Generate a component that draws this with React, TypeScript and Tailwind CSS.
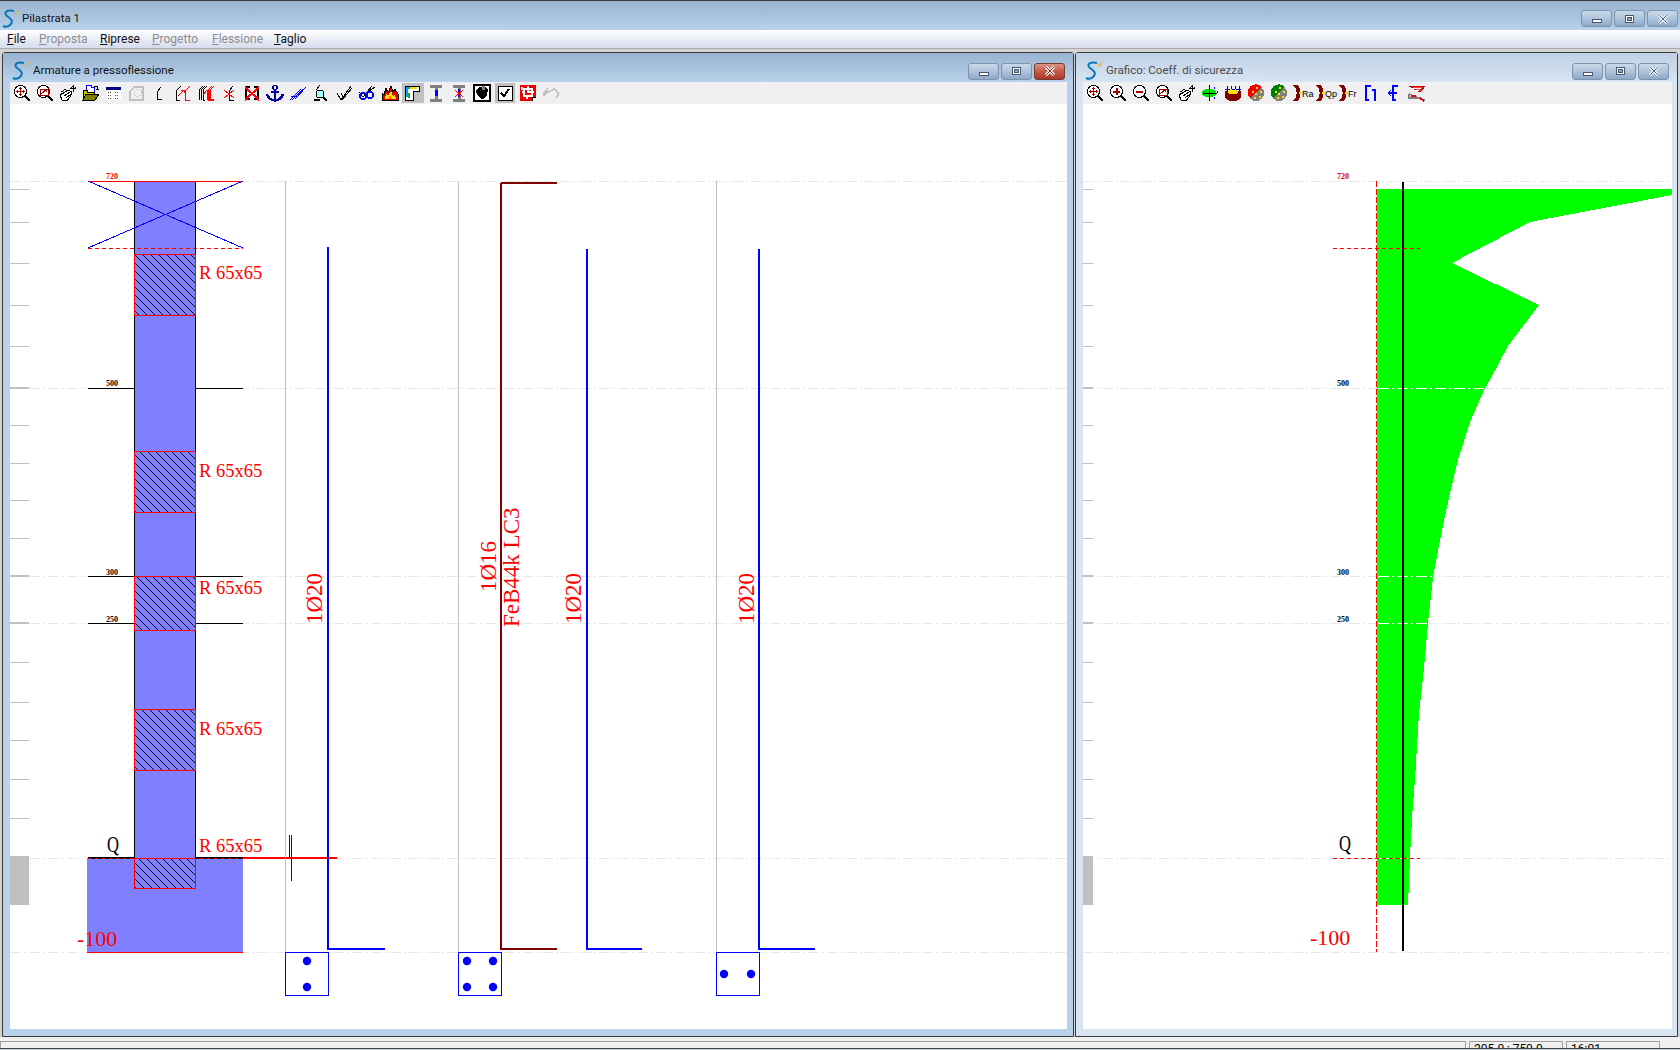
import React from "react";

const ticks = [189, 222, 263, 305, 346, 388, 425, 463, 500, 538, 576, 623, 662, 702, 740, 779, 818, 857];
const levels = [181, 388, 576, 623, 858, 952];
const hatches = [
    [254, 315],
    [451, 512],
    [576, 630],
    [709, 770],
    [858, 888],
];
const rLabels = [279, 477, 594, 735, 852];

const serif = "Liberation Serif, serif";

const Logo = () => (
    <svg width="18" height="20" viewBox="0 0 18 20" className="shrink-0">
        <path d="M12 2 C5 0 1 4 5 7 C9 10 12 12 8 16 C6 18 3 18 1 17" fill="none" stroke="#0a78b8" strokeWidth="2" />
        <path d="M13 2 L14.5 6 L17 1" fill="none" stroke="#e0b030" strokeWidth="1" />
    </svg>
);

const WinBtn = ({ kind, active }: { kind: "min" | "max" | "close"; active?: boolean }) => (
    <div
        className={
            active
                ? "w-[31px] h-[17px] rounded-[3px] border border-[#7a3a30] bg-linear-to-b from-[#dc9484] via-[#c45a44] to-[#a83c2c] flex items-center justify-center"
                : "w-[31px] h-[17px] rounded-[3px] border border-[#7f93ab] bg-linear-to-b from-[#c9d9ea] via-[#aec4dc] to-[#8ca8c8] flex items-center justify-center"
        }
    >
        {kind === "min" && <div className="w-[10px] h-[4px] mt-[5px] bg-white border border-[#49566a]" />}
        {kind === "max" && (
            <div className="w-[9px] h-[8px] border border-[#49566a] bg-white flex items-center justify-center">
                <div className="w-[5px] h-[4px] bg-[#8ea6c2] border border-[#49566a]" />
            </div>
        )}
        {kind === "close" && (
            <svg width="12" height="10" viewBox="0 0 12 10">
                <path d="M2 1 L10 9 M10 1 L2 9" stroke={active ? "#ffffff" : "#eef3f8"} strokeWidth="3" />
                <path d="M2 1 L10 9 M10 1 L2 9" stroke={active ? "#7a2a20" : "#55657a"} strokeWidth="1" />
            </svg>
        )}
    </div>
);

const Lens = ({ children }: { children?: React.ReactNode }) => (
    <>
        <circle cx="7.5" cy="7.5" r="6" fill="#fff" stroke="#000" strokeWidth="1.2" />
        <path d="M12 12 L17 17" stroke="#000" strokeWidth="2.4" />
        {children}
    </>
);

const cross = <path d="M7.5 3 V12 M3 7.5 H12 M6 4.5 H9 M6 10.5 H9 M4.500 6 V9 M10.500 6 V9" stroke="#a00000" strokeWidth="1" fill="none" />;
const winArrow = <path d="M4 5 H12 V11 H4 Z M5 10 L10 6 M8 6 H10 V8" stroke="#a00000" strokeWidth="1" fill="none" />;

const hand = (
    <>
        <path d="M1 11 L9 6 L13 8 L11 13 L8 17 L3 16 Z" fill="#fff" stroke="#000" />
        <path d="M2 8 L7 5 M3 10 L9 6 M5 12 L11 8 M7 14 L12 10" stroke="#000" />
        <path d="M14 1 V8 M11 4 H17 M13 2 H15 M12 3 V5 M16 3 V5" stroke="#000" />
    </>
);

const iconsLeft: React.ReactNode[] = [
    <Lens key="a">{cross}</Lens>,
    <Lens key="b">{winArrow}</Lens>,
    hand,
    <>
        <path d="M4 1 H9 V3 H12 V9 H4 Z" fill="#fff" stroke="#0000ff" />
        <path d="M1 6 H5 V8 H12 V16 H1 Z" fill="#c8c800" stroke="#000" />
        <path d="M4 10 H17 L13 16 H1 Z" fill="#808000" stroke="#000" />
        <path d="M12 2 L15 2 L15 6 M13.500 5 H16.500" stroke="#000" fill="none" />
    </>,
    <>
        <rect x="1" y="3" width="15" height="13" fill="#fff" />
        <rect x="1" y="3" width="15" height="3" fill="#000080" />
        <path d="M3 8 H7 M10 8 H14 M3 11 H7 M10 11 H14 M3 14 H7 M10 14 H14" stroke="#555" strokeDasharray="1 1" />
    </>,
    <>
        <path d="M2 16 V8 L6 3 H15 V16 Z" fill="none" stroke="#c0c0c0" strokeWidth="1.4" />
        <circle cx="10" cy="9" r="3.500" fill="none" stroke="#c0c0c0" strokeDasharray="1 1" />
    </>,
    <path d="M10 3 L6 8 V15 H11" fill="none" stroke="#000" strokeWidth="1" />,
    <>
        <path d="M7 2 L2 7 V16 H6" fill="none" stroke="#000" strokeWidth="1" />
        <path d="M16 2 L11 7 V16 H16" fill="none" stroke="#f00" strokeWidth="1" />
        <path d="M4 12 L10 6 M7 6 H10 V9" fill="none" stroke="#f00" />
    </>,
    <>
        <path d="M6 2 L2 6 V16 M8 2 L4 6 V16 M10 2 L6 6 V16 H8" fill="none" stroke="#000" />
        <path d="M15 2 L11 6 V16 M17 2 L13 6 V16 H17 M11 16 H13" fill="none" stroke="#f00" strokeWidth="1.400" />
        <path d="M6 11 L10 6" stroke="#f00" />
    </>,
    <>
        <path d="M13 2 L9 7 V16 H14" fill="none" stroke="#000" />
        <path d="M4 6 L14 14 M14 6 L4 14" stroke="#f00" strokeWidth="1" />
    </>,
    <>
        <path d="M7 3 H3 V15 H7 M11 3 H15 V15 H11" fill="none" stroke="#000" strokeWidth="1.200" />
        <path d="M2 3 L16 16 M16 3 L2 16" stroke="#f00" strokeWidth="2" />
    </>,
    <>
        <circle cx="9" cy="3.500" r="2" fill="none" stroke="#0000a0" strokeWidth="1.500" />
        <path d="M9 5 V16 M5 8 H13" stroke="#0000a0" strokeWidth="2.400" />
        <path d="M1 10 C2 14 5 16 9 16.500 C13 16 16 14 17 10" fill="none" stroke="#0000a0" strokeWidth="2.400" />
    </>,
    <path d="M1 16 L12 5 M3 16 L14 5 M6 15 L17 3 M2 12 H8 M6 10 L9 13 M9 7 L12 10" fill="none" stroke="#0000e0" strokeWidth="1" />,
    <>
        <path d="M8 1 L4 6" stroke="#000" fill="none" />
        <circle cx="8" cy="10" r="4" fill="#a0ffff" stroke="#000" strokeWidth="1" />
        <path d="M11 13 L15 17 M2 16 H8" stroke="#000" strokeWidth="1.800" />
    </>,
    <path d="M2 9 L6 16 L16 2 M6 9 L8 13 M7 16 L17 4" fill="none" stroke="#000" strokeWidth="1" />,
    <>
        <path d="M1 8 L5 13 L14 2 M8 9 L17 3" fill="none" stroke="#000" strokeWidth="1" />
        <circle cx="5" cy="12" r="3" fill="none" stroke="#0000ff" strokeWidth="1.500" />
        <circle cx="12" cy="11" r="3" fill="none" stroke="#0000ff" strokeWidth="1.500" />
    </>,
    <>
        <path d="M1 16 V9 L3 11 L5 4 L7 9 L10 2 L12 8 L14 5 L17 10 V16 Z" fill="#e00000" stroke="#000" />
        <path d="M4 15 L5 10 L7 12 L10 7 L12 12 L14 10 L15 15 Z" fill="#ffe000" />
        <path d="M7 15 L9 11 L11 15 Z" fill="#ff8000" />
    </>,
    <>
        <rect x="-2" y="-1" width="22" height="20" fill="#c0c0c0" />
        <path d="M1 2 H15 V7 H9 V16 H1 Z" fill="#fff" stroke="#000" strokeWidth="1" />
        <path d="M3 13 V4 H7" fill="none" stroke="#00a0ff" strokeWidth="2" />
        <path d="M6 4 H13" stroke="#ffe000" strokeWidth="2" />
        <path d="M5 9 V14" stroke="#00c000" strokeWidth="2" />
    </>,
    <>
        <path d="M3 2 H15 M3 16 H15" stroke="#808080" strokeWidth="3" />
        <path d="M9 3 V15" stroke="#808080" strokeWidth="3" />
        <path d="M9 6 V12" stroke="#0000ff" strokeWidth="3" />
    </>,
    <>
        <path d="M3 2 H15 M3 16 H15" stroke="#808080" strokeWidth="3" />
        <path d="M9 3 V15" stroke="#808080" strokeWidth="3" />
        <path d="M9 5 V13" stroke="#0000ff" strokeWidth="2" />
        <path d="M5 6 L13 13 M13 6 L5 13" stroke="#f00" strokeWidth="1" />
    </>,
    <>
        <rect x="1" y="1" width="16" height="16" fill="#fff" stroke="#000" strokeWidth="1.500" />
        <path d="M3 6 L6 3 H12 L15 6 L14 11 L10 15 H8 L4 11 Z" fill="#000" />
        <rect x="9" y="2" width="3" height="4" fill="#808080" />
    </>,
    <>
        <rect x="-1" y="-1" width="20" height="20" fill="#c0c0c0" />
        <rect x="2" y="2" width="14" height="14" fill="#fff" stroke="#000" strokeWidth="1" />
        <path d="M5 9 L8 12 L13 5" fill="none" stroke="#000" strokeWidth="2" />
    </>,
    <>
        <path d="M1 1 H17 V13 L13 17 H1 Z" fill="#f00000" />
        <path d="M13 17 V13 H17" fill="#fff" stroke="#000" />
        <path d="M5 5 H13 V12 H5 Z M9 2 V8 H15 M3 8 H6 M8 12 V15 M3 3 V6" fill="none" stroke="#fff" strokeWidth="1.500" />
    </>,
    <path d="M2 8 H7 M2 8 V12 M2 8 L6 5 M3 10 L12 5 L16 8 V12 L13 14" fill="none" stroke="#c0c0c0" strokeWidth="1.400" />,
];

const Section = ({ code }: { code: string }) => (
    <>
        <path d="M0 1 C5 4 5 14 0 17 L5 17 C8 13 8 5 5 1 Z" fill="#800000" />
        <rect x="6" y="8" width="3" height="2" fill="#ffe000" />
        <text x="9" y="13" fontSize="9" fontFamily="Liberation Sans, sans-serif" fill="#000">
            {code}
        </text>
    </>
);

const iconsRight: React.ReactNode[] = [
    <Lens key="a">{cross}</Lens>,
    <Lens key="b">
        <path d="M7.500 4 V11 M4 7.500 H11" stroke="#a00000" strokeWidth="2" />
    </Lens>,
    <Lens key="c">
        <path d="M4 7.500 H11" stroke="#a00000" strokeWidth="2" />
    </Lens>,
    <Lens key="d">{winArrow}</Lens>,
    hand,
    <>
        <ellipse cx="8" cy="9" rx="7" ry="4.500" fill="#00e000" />
        <path d="M8 1 V17 M2 9 H16" stroke="#000" />
        <path d="M13 3 V5 M13 13 V15 M16 7 V9" stroke="#0000ff" />
    </>,
    <>
        <path d="M1 7 H17 V12 C17 16 14 17 9 17 C4 17 1 16 1 12 Z" fill="#800000" />
        <path d="M3 2 V9 M7 2 V9 M11 2 V9 M15 2 V9 M1 5 H17" stroke="#0000c0" />
        <path d="M4 7 L7 5 L9 7 L12 5 L14 8 L13 10 H5 Z" fill="#ffe000" />
    </>,
    <>
        <circle cx="9" cy="9" r="8" fill="#808080" />
        <path d="M15 3 A8 8 0 0 0 3 14 Z" fill="#f00000" />
        <path d="M5 8 H7 M9 4 H11 M8 10 H10 M13 8 H15 M7 14 H9 M12 13 H14" stroke="#ffe000" strokeWidth="2" />
    </>,
    <>
        <circle cx="9" cy="9" r="8" fill="#808080" />
        <path d="M15 3 A8 8 0 0 0 3 14 Z" fill="#008000" />
        <path d="M5 8 H7 M9 4 H11 M8 10 H10 M13 8 H15 M7 14 H9 M12 13 H14" stroke="#ffe000" strokeWidth="2" />
    </>,
    <Section key="ra" code="Ra" />,
    <Section key="qp" code="Qp" />,
    <Section key="fr" code="Fr" />,
    <path d="M9 2 H4 V16 H7 M10 6 H13 V17" fill="none" stroke="#0000ff" strokeWidth="1.400" />,
    <path d="M13 2 H8 V16 H11 M3 9 H12 M6 6 L3 9 L6 12" fill="none" stroke="#0000ff" strokeWidth="1.300" />,
    <>
        <path d="M1 2 H17 L12 8 Z" fill="#f04040" stroke="#c00000" />
        <path d="M2 4 H13 M4 6 H11" stroke="#fff" />
        <path d="M1 10 L16 16 V17 M1 10 V14 H10" fill="none" stroke="#808080" strokeWidth="1.500" />
        <path d="M3 12 H8 M12 14 L16 17" stroke="#f00000" strokeWidth="2" />
    </>,
];

const Toolbar = ({ icons }: { icons: React.ReactNode[] }) => (
    <div className="h-[22px] bg-[#f0f0f0] flex items-center shrink-0">
        {icons.map((icon, i) => (
            <div key={i} className="w-[23px] h-[22px] flex items-center justify-center shrink-0">
                <svg width="18" height="18" viewBox="0 0 18 18" shapeRendering="crispEdges" className="overflow-visible">
                    {icon}
                </svg>
            </div>
        ))}
    </div>
);

const Window = ({
    title,
    active,
    width,
    icons,
    children,
}: {
    title: string;
    active?: boolean;
    width: string;
    icons: React.ReactNode[];
    children: React.ReactNode;
}) => (
    <div className={`${width} h-[985px] border border-[#3a3a3a] rounded-t-[3px] flex flex-col shrink-0 ${active ? "bg-[#b9d1ea]" : "bg-[#d7e4f2]"}`}>
        <div
            className={
                active
                    ? "h-[29px] shrink-0 pl-[9px] pr-[8px] pt-[7px] flex items-center bg-linear-to-b from-[#99b4d1] to-[#b9d1ea]"
                    : "h-[29px] shrink-0 pl-[9px] pr-[8px] pt-[7px] flex items-center bg-linear-to-b from-[#bfd1e5] to-[#d7e4f2]"
            }
        >
            <Logo />
            <span className={`ml-[3px] text-[11.5px] ${active ? "text-[#101010]" : "text-[#4a4a4a]"}`}>{title}</span>
            <div className="ml-auto flex gap-[2px]">
                <WinBtn kind="min" />
                <WinBtn kind="max" />
                <WinBtn kind="close" active={active} />
            </div>
        </div>
        <div className={`flex-1 ml-[7px] ${active ? "mr-[6px]" : "mr-[5px]"} mb-[7px] flex flex-col`}>
            <Toolbar icons={icons} />
            <div className="flex-1 bg-white">{children}</div>
        </div>
    </div>
);

const Scale = ({ from, to, tickEnd }: { from: number; to: number; tickEnd: number }) => (
    <g shapeRendering="crispEdges">
        {levels.map((y) => (
            <line key={y} x1={from} x2={to} y1={y + 0.5} y2={y + 0.5} stroke="#e8e8e8" strokeDasharray="11 3 2 3" />
        ))}
        {ticks.map((y) => (
            <line
                key={y}
                x1={from}
                x2={tickEnd}
                y1={y}
                y2={y}
                stroke="#c0c0c0"
                strokeWidth={y === 388 || y === 576 || y === 623 ? 2 : 1}
            />
        ))}
        <rect x={from} y={856} width={tickEnd - from} height={49} fill="#c0c0c0" />
    </g>
);

const Tiny = ({ x, y, t, fill }: { x: number; y: number; t: string; fill: string }) => (
    <text x={x} y={y} fontFamily={serif} fontWeight="bold" fontSize="8" fill={fill}>
        {t}
    </text>
);

const Rotated = ({ x, y, t }: { x: number; y: number; t: string }) => (
    <text x={x} y={y} transform={`rotate(-90 ${x} ${y})`} fontFamily={serif} fontSize="23" fill="#ff0000">
        {t}
    </text>
);

const Bar = ({ x, top, end, colour = "#0000ff" }: { x: number; top: number; end: number; colour?: string }) => (
    <path d={`M${x} ${top} V949 H${end}`} fill="none" stroke={colour} strokeWidth="2" />
);

const Zero = ({ x, y }: { x: number; y: number }) => (
    <text x={x} y={y} fontFamily={serif} fontSize="23" textLength="12" lengthAdjust="spacingAndGlyphs" fill="#000">
        Q
    </text>
);

const LeftChart = () => (
    <svg width="1057" height="925" viewBox="10 104 1057 925" className="block">
        <defs>
            <pattern id="hatch" patternUnits="userSpaceOnUse" width="8" height="8">
                <path d="M0 0 L8 8" stroke="#000" strokeWidth="1" />
            </pattern>
        </defs>
        <Scale from={10} to={1067} tickEnd={29} />
        <g shapeRendering="crispEdges">
            <rect x="134" y="181" width="62" height="677" fill="#8080ff" />
            <rect x="87" y="858" width="156" height="94" fill="#8080ff" />
            <path d="M134.500 181 V858 M195.500 181 V858" stroke="#000" fill="none" />
            {hatches.map(([a, b]) => (
                <rect key={a} x="134.500" y={a + 0.5} width="61" height={b - a} fill="url(#hatch)" stroke="#ff0000" />
            ))}
            <path d="M88 181.500 H243" stroke="#ff0000" />
            <path d="M88 248.500 H243" stroke="#ff0000" strokeDasharray="4 3" />
            <path d="M88 181 L243 248 M88 248 L243 181" stroke="#0000ff" />
            {[388, 576, 623].map((y) => (
                <path key={y} d={`M88 ${y + 0.5} H134 M196 ${y + 0.5} H243`} stroke="#000" />
            ))}
            <path d="M88 858 H134 M196 858 H243" stroke="#000" strokeWidth="2" />
            <path d="M88 858 H243" stroke="#ff0000" strokeDasharray="3 4" />
            <path d="M243 858 H337" stroke="#ff0000" strokeWidth="2" />
            <path d="M87 952.500 H243" stroke="#ff0000" />

            {[285.500, 458.500, 716.500].map((x) => (
                <path key={x} d={`M${x} 181 V952`} stroke="#c0c0c0" />
            ))}
            <path d="M289.500 835 V858 M291.500 835 V881" stroke="#0000ff" />
            <Bar x={328} top={247} end={385} />
            <path d="M501 183 V949 H557 M501 183 H557" fill="none" stroke="#800000" strokeWidth="2" />
            <Bar x={587} top={249} end={642} />
            <Bar x={759} top={249} end={815} />
            {[285.500, 458.500, 716.500].map((x) => (
                <rect key={x} x={x} y="952.500" width="43" height="43" fill="#fff" stroke="#0000ff" />
            ))}
        </g>
        {[
            [307, 961],
            [307, 987],
            [467, 961],
            [493, 961],
            [467, 987],
            [493, 987],
            [724, 974],
            [751, 974],
        ].map(([cx, cy]) => (
            <circle key={`${cx}-${cy}`} cx={cx} cy={cy} r="4.200" fill="#0000ff" />
        ))}
        {rLabels.map((y) => (
            <text key={y} x="199" y={y} fontFamily={serif} fontSize="18.500" fill="#ff0000">
                R 65x65
            </text>
        ))}
        <Tiny x={106} y={179} t="720" fill="#e00000" />
        <Tiny x={106} y={386} t="500" fill="#000" />
        <Tiny x={106} y={575} t="300" fill="#000" />
        <Tiny x={106} y={622} t="250" fill="#000" />
        <Zero x={107} y={852} />
        <text x="77" y="946" fontFamily={serif} fontSize="22" fill="#ff0000">
            -100
        </text>
        <Rotated x={322} y={624} t="1Ø20" />
        <Rotated x={496} y={592} t="1Ø16" />
        <Rotated x={519} y={627} t="FeB44k LC3" />
        <Rotated x={581} y={624} t="1Ø20" />
        <Rotated x={754} y={624} t="1Ø20" />
    </svg>
);

const RightChart = () => (
    <svg width="589" height="925" viewBox="1083 104 589 925" className="block">
        <Scale from={1083} to={1672} tickEnd={1093} />
        <g shapeRendering="crispEdges">
            <polygon
                fill="#00ff00"
                points="1377,189 1672,189 1672,195 1530,222 1452,263 1539,305 1508,346 1490,380 1485,388 1470,422 1458,460 1450,493 1442,530 1435,567 1433,577 1428,623 1425,657 1422,687 1419,713 1418,730 1415,779 1412,818 1410,857 1408,905 1377,905"
            />
            {[
                [388, 1485],
                [576, 1433],
                [623, 1428],
                [858, 1410],
            ].map(([y, end]) => (
                <path key={y} d={`M1378 ${y + 0.5} H${end}`} stroke="#fff" strokeDasharray="11 3 2 3" />
            ))}
            <path d="M1376.500 181 V952" stroke="#ff0000" strokeDasharray="6 2" />
            <path d="M1333 248.500 H1420 M1333 858.500 H1420" stroke="#ff0000" strokeDasharray="4 3" />
            <path d="M1403 182 V951" stroke="#000" strokeWidth="2" />
        </g>
        <Tiny x={1337} y={179} t="720" fill="#e00000" />
        <Tiny x={1337} y={386} t="500" fill="#000" />
        <Tiny x={1337} y={575} t="300" fill="#000" />
        <Tiny x={1337} y={622} t="250" fill="#000" />
        <Zero x={1339} y={851} />
        <text x="1310" y="945" fontFamily={serif} fontSize="22" fill="#ff0000">
            -100
        </text>
    </svg>
);

const MenuItem = ({ first, rest, off, w }: { first: string; rest: string; off?: boolean; w: string }) => (
    <span className={`${w} ${off ? "text-[#8d8d8d]" : "text-[#101010]"}`}>
        <span className="underline">{first}</span>
        {rest}
    </span>
);

export default function App() {
    return (
        <div className="w-[1680px] h-[1050px] overflow-hidden flex flex-col bg-[#d4d4d4] font-['Roboto',sans-serif]">
            <div className="h-[30px] shrink-0 border-t border-[#3a3a3a] bg-linear-to-b from-[#99b4d1] to-[#b9d1ea] pl-[2px] pr-[2px] pt-[6px] flex items-center">
                <Logo />
                <span className="ml-[2px] text-[11.5px] text-[#101010]">Pilastrata 1</span>
                <div className="ml-auto flex gap-[2px]">
                    <WinBtn kind="min" />
                    <WinBtn kind="max" />
                    <WinBtn kind="close" />
                </div>
            </div>
            <div className="h-[19px] shrink-0 border-b border-[#a8a8a8] bg-linear-to-b from-white to-[#d6dcee] pl-[7px] flex items-center text-[12px]">
                <MenuItem first="F" rest="ile" w="w-[32px]" />
                <MenuItem first="P" rest="roposta" off w="w-[61px]" />
                <MenuItem first="R" rest="iprese" w="w-[52px]" />
                <MenuItem first="P" rest="rogetto" off w="w-[60px]" />
                <MenuItem first="F" rest="lessione" off w="w-[62px]" />
                <MenuItem first="T" rest="aglio" w="w-[50px]" />
            </div>
            <div className="flex pl-[2px] gap-[1px] pt-[3px] shrink-0">
                <Window title="Armature a pressoflessione" active width="w-[1072px]" icons={iconsLeft}>
                    <LeftChart />
                </Window>
                <Window title="Grafico: Coeff. di sicurezza" width="w-[603px]" icons={iconsRight}>
                    <RightChart />
                </Window>
            </div>
            <div className="flex-1 flex flex-col bg-[#f0f0f0]">
                <div className="h-[11px] pt-[4px] flex gap-[3px] overflow-hidden text-[12px] leading-[14px] text-black">
                    <div className="w-[1466px] border-t border-x border-[#a0a0a0]" />
                    <div className="w-[94px] border-t border-x border-[#a0a0a0] pl-[4px]">205.0 ; 750.0</div>
                    <div className="w-[94px] border-t border-x border-[#a0a0a0] pl-[4px]">16:01</div>
                </div>
                <div className="flex-1 border-t border-[#404040] bg-[#c8d6e6]" />
            </div>
        </div>
    );
}
